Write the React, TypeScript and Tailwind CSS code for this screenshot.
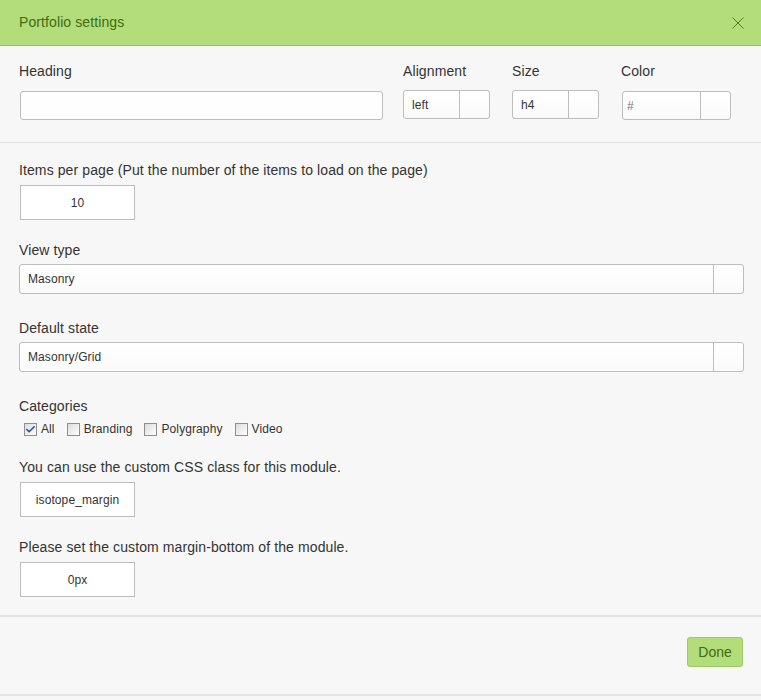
import { Check } from "lucide-react";

const font = "font-['Liberation_Sans',Arial,sans-serif]";

function Label({ children }: { children: React.ReactNode }) {
  return <div className="h-[20px] text-[14px] leading-[20px] tracking-[0.1px] text-[#333]">{children}</div>;
}

function SelectBox({
  value,
  className = "",
  muted = false,
  pad = "pl-[8px]",
}: {
  value: string;
  className?: string;
  muted?: boolean;
  pad?: string;
}) {
  return (
    <div
      className={`flex h-[29px] rounded-[3px] border border-[#bdbdbd] bg-gradient-to-b from-white to-[#fafafa] ${className}`}
    >
      <div className={`flex flex-1 items-center ${pad} text-[12px] tracking-[0.1px] ${muted ? "text-[#777]" : "text-[#333]"}`}>
        {value}
      </div>
      <div className="w-[30px] border-l border-[#bdbdbd]" />
    </div>
  );
}

function SmallInput({ value }: { value: string }) {
  return (
    <div className="flex h-[35px] w-[115px] items-center justify-center border border-[#bdbdbd] bg-white text-[12px] tracking-[0.1px] text-[#333]">
      {value}
    </div>
  );
}

function CheckItem({ label, checked = false }: { label: string; checked?: boolean }) {
  return (
    <div className="flex items-center">
      <span className="flex h-[13px] w-[13px] items-center justify-center border border-[#8e8f8f] bg-gradient-to-br from-[#dcdcdc] to-white">
        {checked && <Check className="h-[11px] w-[11px] text-[#2a4fa8]" strokeWidth={3.5} />}
      </span>
      <span className="ml-[4px] text-[12px] tracking-[0.1px] text-[#333]">{label}</span>
    </div>
  );
}

export default function App() {
  return (
    <div className={`h-[700px] w-[761px] overflow-hidden bg-[#f7f7f7] ${font}`}>
      {/* Header */}
      <div className="flex h-[46px] items-center justify-between border-b border-[#93c653] bg-[#b3dc7b] pl-[19px] pr-[17px]">
        <span className="text-[14px] tracking-[0.1px] text-[#3e6c0e]">Portfolio settings</span>
        <svg width="12" height="12" viewBox="0 0 12 12" className="mt-[1px]">
          <path d="M0.5 0.5 L11.5 11.5 M11.5 0.5 L0.5 11.5" stroke="#4d7f1a" strokeWidth="1" fill="none" />
        </svg>
      </div>

      {/* Heading row */}
      <div className="flex border-b border-[#e2e2e2] pb-[22px] pl-[20px] pt-[15px]">
        <div className="w-[363px]">
          <div className="-ml-px">
            <Label>Heading</Label>
          </div>
          <div className="mt-[10px] h-[29px] rounded-[3px] border border-[#bdbdbd] bg-gradient-to-b from-white to-[#fdfdfd]" />
        </div>
        <div className="ml-[20px] w-[87px]">
          <Label>Alignment</Label>
          <SelectBox value="left" className="mt-[9px]" />
        </div>
        <div className="ml-[22px] w-[87px]">
          <Label>Size</Label>
          <SelectBox value="h4" className="mt-[9px]" />
        </div>
        <div className="ml-[23px] w-[109px]">
          <div className="-ml-px">
            <Label>Color</Label>
          </div>
          <SelectBox value="#" muted pad="pl-[4px]" className="mt-[10px]" />
        </div>
      </div>

      {/* Options */}
      <div className="pb-[18px] pl-[19px] pr-[17px] pt-[17px]">
        <Label>Items per page (Put the number of the items to load on the page)</Label>
        <div className="ml-px mt-[5px]">
          <SmallInput value="10" />
        </div>

        <div className="mt-[20px]">
          <Label>View type</Label>
          <SelectBox value="Masonry" className="mt-[4px] h-[30px]" />
        </div>

        <div className="mt-[24px]">
          <Label>Default state</Label>
          <SelectBox value="Masonry/Grid" className="mt-[4px] h-[30px]" />
        </div>

        <div className="mt-[24px]">
          <Label>Categories</Label>
          <div className="mt-[4px] flex h-[18px] items-center gap-[12px] pl-[5px]">
            <CheckItem label="All" checked />
            <CheckItem label="Branding" />
            <CheckItem label="Polygraphy" />
            <CheckItem label="Video" />
          </div>
        </div>

        <div className="mt-[19px]">
          <Label>You can use the custom CSS class for this module.</Label>
          <div className="ml-px mt-[5px]">
            <SmallInput value="isotope_margin" />
          </div>
        </div>

        <div className="mt-[20px]">
          <Label>Please set the custom margin-bottom of the module.</Label>
          <div className="ml-px mt-[5px]">
            <SmallInput value="0px" />
          </div>
        </div>
      </div>

      {/* Footer */}
      <div className="flex h-[81px] items-start justify-end border-y-2 border-[#e4e4e4] pr-[18px] pt-[20px]">
        <button className="h-[30px] w-[56px] rounded-[3px] border border-[#9ccc5e] bg-[#b3dc7b] text-[14px] text-[#3e6c0e]">
          Done
        </button>
      </div>
    </div>
  );
}
